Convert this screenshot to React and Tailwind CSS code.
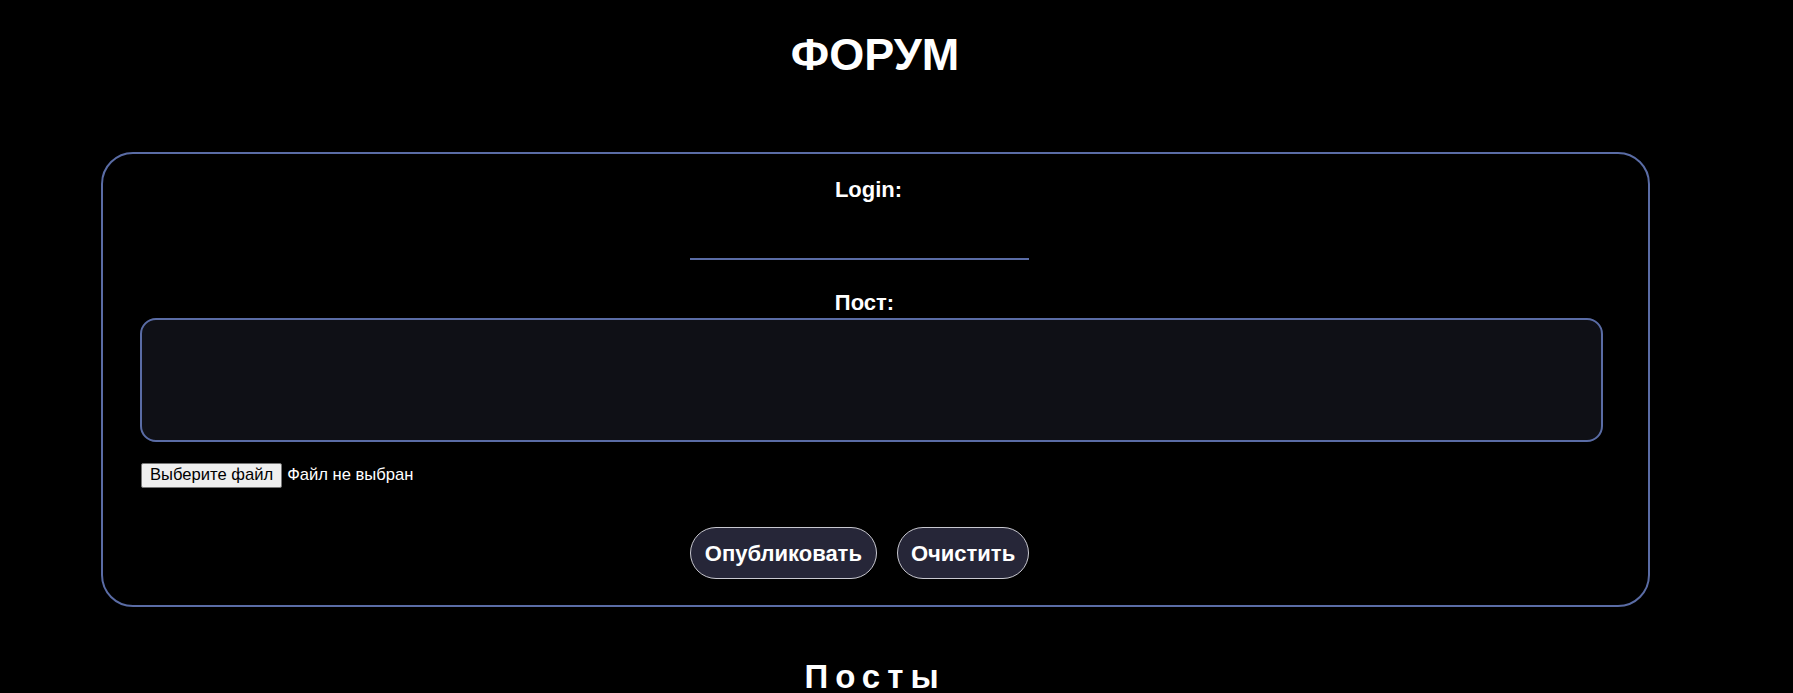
import { useState } from 'react'

function App() {
  const [login, setLogin] = useState('')
  const [post, setPost] = useState('')

  const clear = () => {
    setLogin('')
    setPost('')
  }

  return (
    <div className="min-h-[693px] bg-black text-white font-['Liberation_Sans',Arial,sans-serif]">
      <div className="w-[1750px] pt-[32px] pb-[20px]">
        <h1 className="text-center text-[45px] font-bold leading-none">ФОРУМ</h1>

        {/* Form */}
        <div className="mt-[75px] ml-[101px] w-[1549px] rounded-[32px] border-2 border-[#5a6ca5] pt-[25px] pb-[26px]">
          <div className="flex justify-center pr-[14px]">
            <label className="text-[22px] font-bold leading-none">Login:</label>
          </div>
          <div className="flex justify-center pr-[32px] mt-[19px]">
            <input
              type="text"
              value={login}
              onChange={(e) => setLogin(e.target.value)}
              className="w-[339px] h-[40px] bg-transparent border-b-2 border-[#5a6ca5] outline-none text-white text-[18px] text-center"
            />
          </div>
          <div className="flex justify-center pr-[22px] mt-[32px]">
            <label className="text-[22px] font-bold leading-none">Пост:</label>
          </div>
          <textarea
            value={post}
            onChange={(e) => setPost(e.target.value)}
            className="block mt-[4px] ml-[37px] w-[1463px] h-[124px] resize-none rounded-[16px] border-2 border-[#5a6ca5] bg-[#0f1016] outline-none text-white p-3"
          />

          {/* File input */}
          <div className="flex items-center mt-[21px] ml-[38px] text-[16.6px]">
            <span className="h-[25px] flex items-center px-[8px] bg-[#efefef] border border-[#767676] rounded-[2px] text-black">
              Выберите файл
            </span>
            <span className="ml-[5px] text-white">Файл не выбран</span>
          </div>

          {/* Buttons */}
          <div className="flex justify-center gap-[20px] pr-[32px] mt-[39px]">
            <button className="h-[52px] px-[14px] rounded-full border border-[#c8c8d0] bg-[#262638] text-[22px] font-bold text-white">
              Опубликовать
            </button>
            <button onClick={clear} className="h-[52px] px-[13px] rounded-full border border-[#c8c8d0] bg-[#262638] text-[22px] font-bold text-white">
              Очистить
            </button>
          </div>
        </div>

        <h2 className="mt-[53px] text-center text-[33px] font-bold leading-none tracking-[7px]">Посты</h2>
      </div>
    </div>
  )
}

export default App
